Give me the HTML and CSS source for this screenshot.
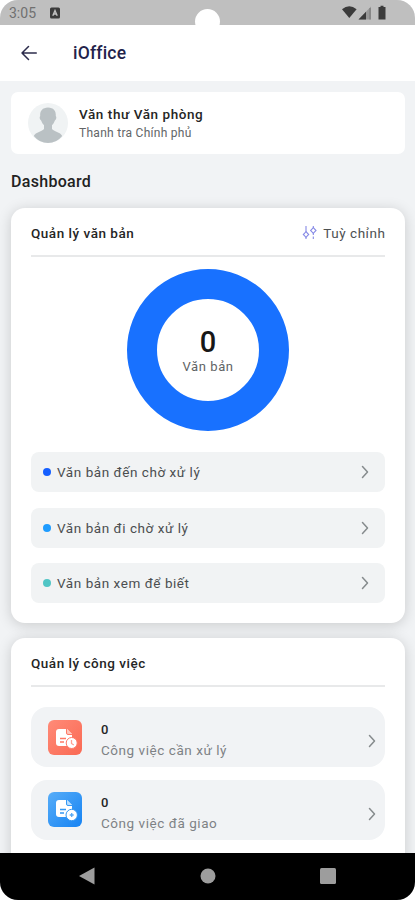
FILE: index.html
```html
<!DOCTYPE html>
<html lang="vi">
<head>
<meta charset="utf-8">
<meta name="viewport" content="width=device-width, initial-scale=1">
<title>iOffice</title>
<link rel="stylesheet" href="styles.css">
</head>
<body>
<div class="phone">
  <div class="status">
    <span class="time">3:05</span>
    <svg class="badge" width="10" height="12" viewBox="0 0 10 12"><rect y=".5" width="10" height="11" rx="1.5" fill="#3b3b3b"/><path d="M2.8 8.8 5 3.5l2.2 5.3M3.5 7h3" fill="none" stroke="#c0c0c0" stroke-width="1.4"/></svg>
    <span class="camera"></span>
    <svg class="signals" width="46" height="16" viewBox="0 0 46 16"><path d="M0 4.200Q7.300-1.600 14.600 4.200L7.300 13Z" fill="#3b3b3b"/><path d="M16.500 14.500 29 1.500v13Z" fill="#999"/><path d="M16.500 14.500 24 6.700v7.800Z" fill="#3b3b3b"/><path d="M28 3v11.500" stroke="#777" stroke-width="1"/><path d="M36.500 2h2V.8h3V2h2v12.500h-7Z" fill="#3b3b3b"/></svg>
  </div>
  <header class="header">
    <svg class="back" width="16" height="16" viewBox="0 0 16 16" fill="none" stroke="#2c2c4c" stroke-width="1.500" stroke-linecap="round" stroke-linejoin="round"><path d="M15.300 8H1M7.500 1.500 1 8l6.500 6.500"/></svg>
    <h1 class="title">iOffice</h1>
  </header>
  <main class="content">
    <section class="profile">
      <svg class="avatar" width="40" height="40" viewBox="0 0 40 40"><circle cx="20" cy="20" r="20" fill="#f0f3f4"/><path d="M20 4.500c5.500 0 8.200 3.500 7.800 8.500 1 .8.600 3.800-.9 4.500-.7 2-1.700 3.600-2.900 4.800V26c1.500 2.500 8.500 3 10.200 7Q28.500 40 20 40T5.800 33C7.500 29 14.500 28.500 16 26v-3.700c-1.200-1.200-2.200-2.800-2.900-4.800-1.500-.7-1.900-3.700-.9-4.500-.4-5 2.300-8.500 7.800-8.500Z" fill="#bac1c4"/></svg>
      <div>
        <div class="name">Văn thư Văn phòng</div>
        <div class="org">Thanh tra Chính phủ</div>
      </div>
    </section>
    <h2 class="section-title">Dashboard</h2>
    <section class="card documents">
      <div class="card-head">
        <h3 class="card-title">Quản lý văn bản</h3>
        <span class="customize">
          <svg width="15" height="14" viewBox="0 0 15 14" fill="none" stroke="#8589e6" stroke-width="1.100"><path d="M4 0v6M4 11v2M11.300 0v2M11.300 7v2M11.300 10.500V13"/><path d="M4 5.700 6.700 8.500 4 11.300 1.300 8.500Z"/><path d="M11.300 1.700 14 4.500l-2.700 2.800-2.700-2.800Z"/></svg>
          <span class="customize-text">Tuỳ chỉnh</span>
        </span>
      </div>
      <div class="chart"><span class="total">0</span><span class="unit">Văn bản</span></div>
      <div class="doc-list">
        <div class="doc"><i class="dot blue"></i><span>Văn bản đến chờ xử lý</span><svg class="chev" width="8" height="14" viewBox="0 0 8 14"><path d="m1.500 1.500 5 5.500-5 5.500"/></svg></div>
        <div class="doc"><i class="dot sky"></i><span>Văn bản đi chờ xử lý</span><svg class="chev" width="8" height="14" viewBox="0 0 8 14"><path d="m1.500 1.500 5 5.500-5 5.500"/></svg></div>
        <div class="doc"><i class="dot teal"></i><span>Văn bản xem để biết</span><svg class="chev" width="8" height="14" viewBox="0 0 8 14"><path d="m1.500 1.500 5 5.500-5 5.500"/></svg></div>
      </div>
    </section>
    <section class="card tasks">
      <div class="card-head"><h3 class="card-title">Quản lý công việc</h3></div>
      <div class="task">
        <svg class="task-icon" width="34" height="35" viewBox="0 0 34 35"><defs><linearGradient id="coral" x2="1" y2="1"><stop stop-color="#ff8b78"/><stop offset="1" stop-color="#fa6953"/></linearGradient></defs><rect width="34" height="35" rx="6" fill="url(#coral)"/><path d="M11 9h8l5 5v10q0 2-2 2H11q-3 0-3-3V12q0-3 3-3Z" fill="#fff"/><path d="M18.500 9v4q0 1.500 1.500 1.500h4" fill="#ffc2b7" stroke="#ff7966"/><path d="M12 18.500h6M12 22h4" stroke="#ff7966" stroke-width="1.300"/><circle cx="23.700" cy="23" r="5.500" fill="#fff" stroke="#ff7966"/><path d="M23.500 20v3.500l2.300 1.500" fill="none" stroke="#ffa294" stroke-width="1.300"/></svg>
        <div class="task-copy"><b>0</b><span>Công việc cần xử lý</span></div>
        <svg class="chev" width="8" height="14" viewBox="0 0 8 14"><path d="m1.500 1.500 5 5.500-5 5.500"/></svg>
      </div>
      <div class="task">
        <svg class="task-icon" width="34" height="35" viewBox="0 0 34 35"><defs><linearGradient id="azure" x2="1" y2="1"><stop stop-color="#57adf8"/><stop offset="1" stop-color="#1683f3"/></linearGradient></defs><rect width="34" height="35" rx="6" fill="url(#azure)"/><path d="M11 8h8l5 5v10q0 2-2 2H11q-3 0-3-3V11q0-3 3-3Z" fill="#fff"/><path d="M18.500 8v4q0 1.500 1.500 1.500h4" fill="#b5dcff" stroke="#3498f4"/><path d="M12 17.500h6M12 21h4" stroke="#3498f4" stroke-width="1.300"/><circle cx="23.700" cy="23" r="5.700" fill="#fff" stroke="#3498f4"/><path d="M23.700 21v4M21.700 23h4" stroke="#55a9f5" stroke-width="1.300"/></svg>
        <div class="task-copy"><b>0</b><span>Công việc đã giao</span></div>
        <svg class="chev" width="8" height="14" viewBox="0 0 8 14"><path d="m1.500 1.500 5 5.500-5 5.500"/></svg>
      </div>
    </section>
  </main>
  <nav class="nav">
    <svg width="16" height="18" viewBox="0 0 16 18"><path d="M0 9 15.500.5v17Z"/></svg>
    <svg width="16" height="16" viewBox="0 0 16 16"><circle cx="8" cy="8" r="7.500"/></svg>
    <svg width="16" height="16" viewBox="0 0 16 16"><rect width="16" height="16" rx="1.500"/></svg>
  </nav>
</div>
</body>
</html>
```
FILE: styles.css
```css
* { box-sizing: border-box; }
body { margin: 0; background: #fff; font-family: Roboto, sans-serif; color: #222; }
h1, h2, h3 { margin: 0; font-weight: 500; }
svg { flex: none; display: block; }
.phone { width: 415px; height: 900px; display: flex; flex-direction: column; overflow: hidden; border-radius: 18px; background: #f1f3f5; }
.status { position: relative; flex: none; height: 25px; background: #bfbfbf; display: flex; align-items: center; padding: 1px 27px 0 9px; }
.time { font-size: 14px; color: #707070; width: 41px; }
.signals { margin-left: auto; }
.camera { position: absolute; left: 195px; top: 9px; width: 25px; height: 25px; border-radius: 50%; background: #fff; }
.header { flex: none; height: 56px; background: #fff; display: flex; align-items: center; padding-left: 21px; }
.title { margin-left: 36px; font-size: 17.500px; line-height: 24px; letter-spacing: .2px; font-variant-ligatures: none; color: #23234b; }
.content { flex: 1; min-height: 0; overflow: hidden; padding: 11px 10px 0 11px; }
.profile { height: 62px; border-radius: 7px; background: #fff; display: flex; align-items: center; padding-left: 17px; gap: 11px; }
.name { font-size: 13.500px; font-weight: 500; line-height: 19px; letter-spacing: .57px; color: #252525; }
.org { font-size: 12px; line-height: 18px; letter-spacing: .28px; color: #626567; }
.section-title { margin-top: 17px; height: 21px; font-size: 16px; line-height: 21px; letter-spacing: .3px; }
.card { border-radius: 14px; background: #fff; padding: 0 20px; box-shadow: 0 2px 14px rgba(0, 0, 0, .17); }
.documents { margin-top: 16px; height: 415px; }
.tasks { margin-top: 15px; height: 250px; }
.card-head { height: 49px; border-bottom: 2px solid #e8e9ea; display: flex; align-items: center; justify-content: space-between; padding-top: 2px; }
.card-title { font-size: 13.500px; line-height: 20px; letter-spacing: .52px; color: #252525; }
.customize { display: flex; align-items: center; gap: 6px; font-size: 13.500px; letter-spacing: .55px; color: #4d5052; }
.customize-text { margin-right: -.5px; }
.chart { width: 162px; height: 162px; margin: 12px auto 21px; border: 30px solid #1871ff; border-radius: 50%; display: flex; flex-direction: column; align-items: center; justify-content: center; }
.total { font-size: 29px; font-weight: 500; line-height: 30px; margin-top: 4px; color: #171717; }
.unit { font-size: 13px; line-height: 20px; letter-spacing: .6px; color: #606365; }
.doc-list { display: grid; gap: 15.500px; }
.doc { height: 40px; border-radius: 8px; background: #f1f3f4; display: flex; align-items: center; padding: 0 16px 0 12px; font-size: 13.500px; letter-spacing: .55px; color: #4b4e50; }
.dot { width: 8px; height: 8px; border-radius: 50%; margin-right: 6px; }
.blue { background: #155fff; }
.sky { background: #1e9cff; }
.teal { background: #50c5c5; }
.chev { margin-left: auto; fill: none; stroke: #868b8d; stroke-width: 1.500; stroke-linecap: round; stroke-linejoin: round; }
.task { margin-top: 12.500px; height: 60px; border-radius: 16px; background: #f1f3f5; display: flex; align-items: center; padding: 0 9px 0 17px; }
.task .chev { margin-top: 8px; }
.card-head + .task { margin-top: 20px; }
.task-copy { margin-left: 19px; padding-top: 6px; display: flex; flex-direction: column; font-size: 13.500px; line-height: 20px; letter-spacing: .55px; color: #7e8285; }
.task-copy b { font-weight: 500; font-size: 13px; color: #252525; }
.nav { flex: none; height: 47px; background: #000; display: flex; align-items: center; justify-content: space-between; padding: 0 79px 1px; fill: #9d9d9d; }
```
